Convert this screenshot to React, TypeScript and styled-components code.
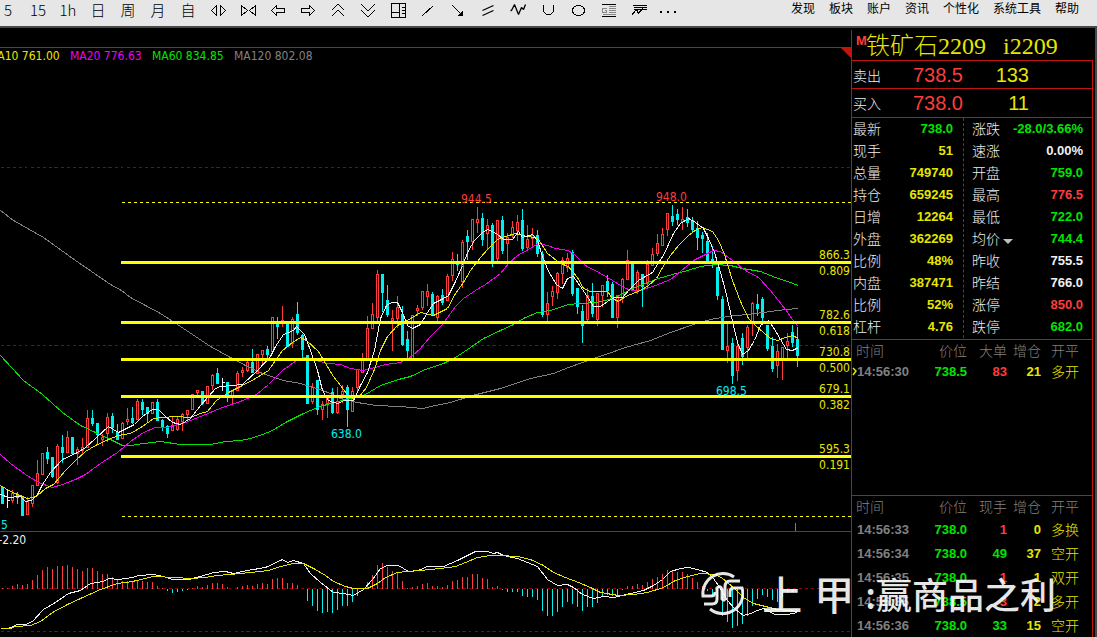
import React from "react";
import styled, { createGlobalStyle } from "styled-components";

const color = {
  line: "#c0140c",
  grid: "#960000",
  red: "#ff3c3c",
  green: "#00e600",
  yellow: "#e6e600",
  cyan: "#00f0f0",
  white: "#f0f0f0",
  gray: "#808080",
  magenta: "#f000f0",
};
type Tone = keyof typeof color;

const Global = createGlobalStyle`
  * { box-sizing: border-box; }
  body {
    margin: 0;
    background: #000;
    overflow: hidden;
    font-family: "Liberation Sans", "Noto Sans CJK SC", sans-serif;
  }
`;

const Screen = styled.div`
  position: relative;
  display: flex;
  flex-direction: column;
  height: 100vh;
  background: #000;
  overflow: hidden;
`;

/* ---------- toolbar ---------- */
const Toolbar = styled.header`
  flex: none;
  display: flex;
  justify-content: space-between;
  height: 28px;
  background: #e6e6e6;
  border-bottom: 2px solid #484848;
`;
const Tools = styled.div`
  display: flex;
  margin-left: -7px;
`;
const Tool = styled.button`
  display: flex;
  align-items: center;
  justify-content: center;
  width: 30px;
  height: 20px;
  padding: 0;
  border: 0;
  background: none;
  color: #000;
  font: 300 15px/20px "Noto Sans CJK SC", sans-serif;
`;
const Menu = styled.nav`
  display: flex;
  gap: 14px;
  padding-right: 18px;
`;
const MenuLink = styled.a`
  color: #000;
  font: 12px/16px "Noto Sans CJK SC", sans-serif;
  text-decoration: none;
  white-space: nowrap;
`;

/* ---------- body ---------- */
const Body = styled.main`
  flex: 1;
  min-height: 0;
  display: flex;
`;
const ChartColumn = styled.section`
  flex: 1;
  min-width: 0;
  overflow: hidden;
  padding-top: 19px;
`;
const Pane = styled.div`
  border-top: 1px solid ${color.line};
`;
const Legend = styled.div`
  display: flex;
  height: 16px;
  margin-left: -12px;
  font: 12px/16px "DejaVu Sans Condensed", "DejaVu Sans", sans-serif;
  font-stretch: condensed;
  white-space: nowrap;
`;
const LegendItem = styled.span<{ $tone: Tone }>`
  width: 82px;
  color: ${(p) => color[p.$tone]};
`;
const Corner = styled.svg`
  margin-left: auto;
`;
const Plot = styled.svg`
  display: block;
  width: 100%;
  height: auto;
  text {
    font: 12px "DejaVu Sans Condensed", "DejaVu Sans", sans-serif;
    font-stretch: condensed;
  }
`;

/* ---------- side panel ---------- */
const Side = styled.aside`
  flex: none;
  display: flex;
  flex-direction: column;
  width: 242px;
  margin-top: 2px;
  border-left: 1px solid ${color.line};
`;
const Edge = styled.div`
  flex: none;
  width: 4px;
  border-right: 2px solid #484848;
`;
const Title = styled.h1`
  display: flex;
  height: 30px;
  margin: 0;
  padding-left: 4px;
  color: ${color.yellow};
  font: 24px/32px "Liberation Serif", "Noto Sans CJK SC", serif;
  font-weight: 300;
  white-space: nowrap;
`;
const TitleMark = styled.span`
  width: 10px;
  color: ${color.red};
  font: bold 13px/22px "Liberation Sans", sans-serif;
`;
const Code = styled.span`
  margin-left: 17px;
`;
const Framed = styled.div`
  flex: 1;
  min-height: 0;
  display: flex;
  flex-direction: column;
  border-right: 1px solid ${color.line};
`;
const BookRow = styled.div`
  flex: none;
  display: grid;
  grid-template-columns: 58px 52px 66px;
  align-items: center;
  height: 28px;
  padding-left: 1px;
  border-top: 1px solid ${color.line};
  & + & { height: 29px; }
`;
const Label = styled.span`
  color: ${color.white};
  font: 300 14px/20px "Noto Sans CJK SC", sans-serif;
`;
const BookValue = styled.span<{ $tone: Tone }>`
  color: ${(p) => color[p.$tone]};
  font-size: 20px;
  line-height: 28px;
  text-align: right;
`;
const Quotes = styled.div`
  flex: none;
  display: grid;
  grid-template-columns: 112px 1fr;
  padding-bottom: 1px;
  border-top: 1px solid ${color.line};
  border-bottom: 1px solid ${color.line};
`;
const QuoteColumn = styled.div<{ $split?: boolean }>`
  padding: ${(p) => (p.$split ? "0 10px 0 1px" : "0 9px 0 8px")};
  border-right: ${(p) => (p.$split ? `1px dashed ${color.line}` : "0")};
`;
const Quote = styled.div`
  display: flex;
  align-items: flex-start;
  height: 22px;
`;
const Value = styled.span<{ $tone: Tone }>`
  margin-left: auto;
  color: ${(p) => color[p.$tone]};
  font: bold 13px/22px "Liberation Sans", sans-serif;
`;
const Caret = styled.svg`
  margin: 11px 0 0 3px;
`;
const Trades = styled.table<{ $row: number }>`
  flex: none;
  width: 100%;
  margin-bottom: -1px;
  table-layout: fixed;
  border-collapse: collapse;
  tbody tr {
    height: ${(p) => p.$row}px;
  }
`;
const Head = styled.th<{ $w?: number; $align?: string }>`
  width: ${(p) => (p.$w ? `${p.$w}px` : "auto")};
  height: 22px;
  padding: 0 0 2px;
  color: ${color.gray};
  font: 300 14px/20px "Noto Sans CJK SC", sans-serif;
  text-align: ${(p) => p.$align || "right"};
  &:first-child { padding-left: 4px; }
  &:last-child { padding-left: 10px; }
`;
const Cell = styled.td<{ $tone: Tone }>`
  padding: 0;
  color: ${(p) => color[p.$tone]};
  font: bold 13px/18px "Liberation Sans", sans-serif;
  text-align: right;
`;
const TimeCell = styled(Cell)`
  text-align: left;
  white-space: nowrap;
`;
const KindCell = styled(Cell)`
  padding: 0 0 2px 10px;
  font: 300 14px/18px "Noto Sans CJK SC", sans-serif;
  text-align: left;
`;
const Marker = styled.svg`
  display: inline-block;
  vertical-align: 0;
`;
const Spacer = styled.div`
  flex: 1;
  min-height: 0;
  border-bottom: 1px solid ${color.line};
`;

/* ---------- watermark ---------- */
const Watermark = styled.div`
  position: absolute;
  right: 41px;
  bottom: 22px;
  display: flex;
  align-items: center;
  height: 44px;
  color: #fff;
  opacity: 0.9;
  pointer-events: none;
  font: 500 36px/44px "Noto Sans CJK SC", sans-serif;
  white-space: nowrap;
`;
const Brand = styled.span`
  display: flex;
  gap: 12px;
  margin: 0 11px 0 18px;
  font-size: 40px;
  line-height: 40px;
`;

/* ---------- data ---------- */
// One row per bar: high, body top, body bottom, low. Kind: r rising, c falling, w flat.
const bars = `c487,487,503,503 w488,500,500,507 r489,493,500,502 c491,494,497,503 c497,497,515,515 r496,501,514,514
r484,485,503,506 r459,473,485,485 r452,453,474,474 c446,452,458,463 c457,457,476,477 r443,446,482,483
c434,447,452,462 r430,437,452,452 c437,437,453,454 r446,449,453,464 r437,447,450,454 r409,418,447,447
c409,418,423,425 c423,423,434,443 r433,437,439,445 r412,417,433,441 c412,416,427,432 c423,432,439,439
r421,423,438,438 r407,419,421,424 c406,418,422,423 r398,401,419,419 c398,402,409,414 c406,407,413,421
r401,402,413,413 c398,402,420,420 c418,420,426,430 c424,426,433,437 r415,425,430,430 r416,419,429,430
r412,414,421,430 r409,410,414,420 r393,394,409,409 r389,390,392,397 c391,391,403,404 r385,386,403,403
r373,375,385,389 c367,373,383,383 w377,382,382,390 c382,382,396,401 r390,391,396,403 r370,373,390,390
r366,370,372,376 r358,362,370,371 c348,362,372,372 r354,354,373,373 r349,350,354,364 c345,349,354,358
r316,317,351,351 c316,322,326,338 r305,320,322,326 c323,324,346,346 r316,319,343,347 c301,314,332,334
c333,335,349,357 c355,355,403,403 r382,387,401,403 c380,380,409,414 r400,404,409,419 r394,397,403,417
c387,392,412,413 r386,401,412,413 r384,391,394,402 c384,387,409,426 r386,391,411,411 r368,369,387,392
r352,360,372,372 r315,328,358,358 r302,314,328,328 r269,274,317,320 c273,274,292,311 c284,300,314,316
r309,318,320,350 r295,307,318,327 c305,314,344,345 c330,339,350,358 r315,315,358,358 r304,308,310,315
r291,291,307,309 r283,291,296,305 c291,294,314,314 r294,296,317,321 c288,295,302,304 r273,276,300,300
r251,259,275,280 c253,262,264,270 r239,242,281,287 c229,236,241,259 r219,219,241,249 r206,219,222,232
c212,218,239,245 r218,225,233,248 c222,225,262,266 r219,220,258,260 c215,220,250,253 r232,237,243,262
r220,227,235,237 r214,222,230,240 c208,220,248,250 r224,239,247,248 r227,235,238,247 c229,235,253,256
c250,254,314,316 r291,303,314,321 r285,291,296,305 r271,273,292,298 r256,260,273,283 r252,258,267,271
c249,252,293,295 c287,288,306,313 c304,311,325,342 r287,295,319,321 c282,296,313,316 r293,293,319,325
r284,285,295,306 c274,281,290,296 c281,284,317,317 r294,295,317,327 r277,279,298,302 r249,260,279,279
c263,263,290,290 r269,272,290,293 c274,274,286,306 r259,264,283,287 r247,254,265,265 r233,243,253,255
r227,234,245,245 r212,213,229,235 c204,216,221,225 c208,214,219,224 r206,219,221,229 c208,217,222,226
c216,220,229,231 c220,228,237,249 c231,235,238,252 c232,241,262,262 c245,259,262,267 c267,267,295,299
c295,299,349,349 r323,346,350,362 c337,343,375,383 r340,346,370,380 c332,338,356,364 r324,327,347,358
r301,303,323,335 c293,304,308,315 c296,299,317,320 c325,325,348,350 c336,346,368,371 r343,351,365,377
r346,347,360,379 r332,341,345,358 c324,332,342,346 c326,339,355,366`
  .split(/\s+/)
  .map((s) => ({ kind: s[0], v: s.slice(1).split(",").map(Number) }));

const averages: { tone: Tone; points: string }[] = [
  {
    tone: "gray",
    points:
      "0,210 13,220 43,237 75,260 110,284 121,290 130,297 160,313 180,326 210,346 230,357 245,365 262,373 283,380 300,383 325,391 340,398 357,402 375,405 400,406 422,408 435,405 450,402 472,395 500,388 530,378 553,373 568,367 585,361 605,354 625,347 650,340 670,332 693,324 710,319 727,316 747,314 770,311 785,309 798,308",
  },
  {
    tone: "green",
    points:
      "0,355 23,380 42,394 62,412 80,425 95,432 110,439 122,445 130,445 143,443 160,441 180,444 210,444 225,441 240,440 250,438 262,434 272,430 287,421 303,413 317,407 333,402 350,398 365,394 380,385 398,379 410,376 425,369 443,363 455,357 470,347 483,338 500,330 513,324 525,317 537,312 550,310 568,304 580,303 595,302 605,300 615,297 630,289 645,283 658,278 672,274 687,270 700,266 715,264 730,265 742,268 760,271 775,277 787,281 798,285",
  },
  {
    tone: "magenta",
    points:
      "0,454 10,463 25,474 38,482 52,487 62,484 75,479 85,474 100,463 117,452 130,441 143,432 155,427 167,427 185,422 205,414 222,407 240,401 256,394 268,384 282,370 296,360 304,357 315,360 328,363 340,364 350,368 363,370 378,366 385,364 400,362 411,356 420,348 430,336 442,324 455,306 463,298 475,290 485,284 500,273 508,263 517,255 528,249 538,243 547,245 555,248 568,250 575,255 585,265 600,273 612,280 625,288 637,291 655,285 670,279 680,271 693,260 705,254 713,250 720,251 732,260 745,270 758,277 770,290 785,309 792,319 798,326",
  },
  {
    tone: "yellow",
    points:
      "0,485 10,491 27,498 36,496 45,488 53,484 65,470 75,460 85,451 95,445 108,439 118,435 130,433 142,426 153,418 162,417 175,416 190,417 200,413 207,411 216,400 228,392 240,386 255,378 268,370 282,350 292,342 300,337 306,340 318,351 325,363 333,376 340,385 346,393 352,398 358,397 366,387 374,369 380,350 387,336 397,325 407,320 420,312 433,315 447,308 455,293 463,282 470,270 480,257 488,248 497,239 505,236 515,233 522,235 533,237 538,239 547,253 560,263 568,266 577,277 583,288 590,291 607,291 612,298 618,301 625,296 640,290 648,285 656,278 662,267 670,255 678,245 688,235 696,229 702,227 712,231 718,240 724,254 732,280 740,301 748,318 755,325 763,332 770,338 777,340 785,337 792,335 798,338",
  },
  {
    tone: "white",
    points:
      "0,494 8,497 20,496 25,501 31,500 37,494 42,484 50,472 62,459 77,452 85,447 95,438 108,426 118,432 128,427 134,424 142,416 152,409 158,409 165,416 172,422 180,424 190,418 200,405 208,396 215,388 220,386 232,385 242,384 257,370 270,356 275,346 283,334 293,330 296,326 304,334 310,350 317,370 322,390 328,400 333,402 338,403 343,400 353,400 360,385 367,372 374,350 380,318 386,305 391,302 397,302 402,312 407,325 412,328 420,324 427,312 433,303 443,298 448,295 455,281 462,265 468,250 474,240 482,232 487,229 496,233 503,239 512,239 518,231 522,237 532,234 537,240 542,256 548,271 556,284 562,288 567,278 573,276 580,286 588,298 593,306 600,306 607,301 614,297 622,297 630,288 638,280 652,272 658,262 663,255 668,244 673,233 680,223 688,218 695,222 703,228 708,238 714,252 720,272 725,290 730,312 737,342 742,354 748,350 754,340 760,325 768,320 773,327 780,339 786,349 792,350 798,347",
  },
];

const levels = [
  { y: 262, price: "866.3", ratio: "0.809" },
  { y: 322, price: "782.6", ratio: "0.618" },
  { y: 359, price: "730.8", ratio: "0.500" },
  { y: 396, price: "679.1", ratio: "0.382" },
  { y: 456, price: "595.3", ratio: "0.191" },
];

// Height of each histogram bar over (or under) the zero line.
const histogram = [
  1, 1, 3, 5, 4, 5, 9, 14, 19, 22, 20, 23, 23, 24, 22, 20, 18, 21, 21, 18, 15, 15, 12, 9, 8, 8, 7, 8, 8, 7, 7, 3, 1,
  -2, -4, -3, -2, -1, 1, 3, 2, 4, 6, 6, 5, 2, 0, 2, 3, 4, 3, 5, 6, 5, 10, 11, 11, 6, 6, 4, 0, -12, -17, -22, -24, -23,
  -24, -21, -17, -17, -13, -7, 0, 7, 14, 24, 26, 22, 18, 16, 8, 1, 2, 3, 5, 6, 3, 3, 2, 4, 8, 9, 12, 12, 15, 15, 11,
  10, 2, 3, -1, -3, -3, -3, -7, -8, -8, -11, -22, -27, -27, -23, -18, -13, -15, -18, -22, -18, -18, -14, -8, -6, -7,
  -6, -1, 3, 3, 5, 4, 7, 10, 12, 15, 19, 19, 17, 17, 15, 11, 7, 3, -2, -7, -11, -27, -33, -39, -37, -35, -27, -17,
  -10, -6, -8, -11, -13, -8, -4, -3, 0,
];
const dif =
  "0,628 8,628 17,624 25,624 32,621 43,609 55,602 68,593 80,590 90,583 103,581 108,578 118,579 132,577 138,575 153,574 163,576 172,579 188,579 200,576 213,572 225,571 233,573 247,570 265,567 282,559 287,562 293,560 303,563 310,573 320,582 333,592 343,593 353,595 363,589 372,579 380,568 387,565 398,565 408,571 418,570 427,566 443,566 457,560 475,551 487,551 493,553 497,552 503,555 517,558 527,562 537,566 547,579 557,585 567,584 573,587 582,594 593,598 603,596 613,597 622,595 630,593 643,590 653,585 662,579 670,571 680,568 688,567 697,569 707,572 713,578 720,588 727,600 735,609 743,615 750,613 757,610 763,608 770,612 775,614 787,614 797,612";
const dea =
  "0,628 10,628 15,626 30,625 40,621 52,612 67,604 80,598 100,589 117,583 132,581 153,576 175,577 190,578 205,577 217,575 240,573 250,572 268,570 280,566 293,563 303,563 313,568 325,575 333,581 345,586 353,588 367,588 377,583 385,577 397,572 407,571 420,570 440,568 455,566 465,562 477,557 490,555 500,555 517,556 530,559 543,565 553,572 565,577 578,582 590,587 600,592 618,595 633,594 647,592 663,587 675,580 687,576 700,573 715,574 722,578 733,587 743,597 753,603 765,606 777,609 797,611";

const leftQuotes: [string, string, Tone][] = [
  ["最新", "738.0", "green"],
  ["现手", "51", "yellow"],
  ["总量", "749740", "yellow"],
  ["持仓", "659245", "yellow"],
  ["日增", "12264", "yellow"],
  ["外盘", "362269", "yellow"],
  ["比例", "48%", "yellow"],
  ["内盘", "387471", "yellow"],
  ["比例", "52%", "yellow"],
  ["杠杆", "4.76", "yellow"],
];
const rightQuotes: [string, string, Tone][] = [
  ["涨跌", "-28.0/3.66%", "green"],
  ["速涨", "0.00%", "white"],
  ["开盘", "759.0", "green"],
  ["最高", "776.5", "red"],
  ["最低", "722.0", "green"],
  ["均价", "744.4", "green"],
  ["昨收", "755.5", "white"],
  ["昨结", "766.0", "white"],
  ["涨停", "850.0", "red"],
  ["跌停", "682.0", "green"],
];

type Trade = { time: string; price: string; lots: string; tone: Tone; delta: string; kind: string; marked?: boolean };
const bigTrades: Trade[] = [
  { time: "14:56:30", price: "738.5", lots: "83", tone: "red", delta: "21", kind: "多开", marked: true },
];
const ticks: Trade[] = [
  { time: "14:56:33", price: "738.0", lots: "1", tone: "red", delta: "0", kind: "多换" },
  { time: "14:56:34", price: "738.0", lots: "49", tone: "green", delta: "37", kind: "空开" },
  { time: "14:56:35", price: "738.0", lots: "1", tone: "red", delta: "1", kind: "双开" },
  { time: "14:56:35", price: "738.5", lots: "3", tone: "red", delta: "2", kind: "多开" },
  { time: "14:56:36", price: "738.0", lots: "33", tone: "green", delta: "15", kind: "空开" },
];

/* ---------- toolbar icons, drawn on a 20px grid ---------- */
const icons: { name: string; art: React.ReactNode }[] = [
  { name: "横向放大", art: <path d="M8 5v10M8 5L3 10l5 5M12 5v10M12 5l5 5-5 5" /> },
  { name: "横向缩小", art: <path d="M3 5v10l6-5zM17 5v10l-6-5z" /> },
  { name: "左移", art: <path d="M3 10l5-5v3h8v4H8v3z" /> },
  { name: "右移", art: <path d="M16 10l-5-5v3H3v4h8v3z" /> },
  { name: "向上", art: <path d="M3 10l6-6 1 0 6 6M3 16l6-6 1 0 6 6" /> },
  { name: "向下", art: <path d="M3 4l6 6 1 0 6-6M3 10l6 6 1 0 6-6" /> },
  {
    name: "布局",
    art: <path d="M3 3h14v14H3zM11 3v14M3 12h8M13 7h3M13 10h3M13 13h3" />,
  },
  { name: "直线", art: <path d="M4 15L15 5" /> },
  {
    name: "箭头线",
    art: (
      <>
        <path d="M4 5l9 9" />
        <path d="M14 11v4h-4z" fill="#000" />
      </>
    ),
  },
  { name: "平行线", art: <path d="M4 10l11-5M4 15l11-5" strokeWidth="1.3" shapeRendering="auto" /> },
  {
    name: "波浪线",
    art: <path d="M2 10h1l3-6 4 10 3-7 2 2 2-5" strokeWidth="1.3" strokeLinejoin="bevel" shapeRendering="auto" />,
  },
  { name: "弧线", art: <path d="M5 4v6q1 4 5 4t5-4V4" /> },
  { name: "椭圆", art: <ellipse cx="10" cy="10" rx="6" ry="5" /> },
  {
    name: "黄金分割",
    art: (
      <>
        <path d="M3 4h14M3 16h14" />
        <path d="M10 6h7M10 8h7M10 10h7M10 12h7M4 14h13M8 8H4v4h4v-2H6" stroke="#888" />
      </>
    ),
  },
  { name: "扇形线", art: <path d="M4 5h14M5 7h13M5 9h13M3 15l5-6 2 4 4-5M10 12l4-4" /> },
  {
    name: "更多",
    art: <path d="M2 11h1v1H2zM9 11h1v1H9zM16 11h1v1h-1z" fill="#000" />,
  },
];

const Icon = ({ children }: { children: React.ReactNode }) => (
  <svg width="20" height="20" viewBox="0 0 20 20" fill="none" stroke="#000" shapeRendering="crispEdges" aria-hidden>
    <g transform="translate(.5 .5)">{children}</g>
  </svg>
);

function PriceChart() {
  return (
    <Plot viewBox="0 64 851 467" shapeRendering="crispEdges">
      <g transform="translate(.5 .5)" fill="none">
        <path d="M0 167H850M0 345H850" stroke={color.grid} strokeDasharray="3 3" />
        {bars.map(({ kind, v: [high, top, bottom, low] }, i) => {
          const x = 2 + i * 5;
          const tone = kind === "r" ? color.red : kind === "c" ? color.cyan : color.white;
          return (
            <g key={i} stroke={tone}>
              <path d={`M${x} ${high}V${low}`} />
              {kind === "w" ? (
                <path d={`M${x - 1} ${top}h3`} />
              ) : (
                <rect
                  x={x - 1}
                  y={top}
                  width={2}
                  height={Math.max(1, bottom - top)}
                  fill={kind === "r" ? "#000" : color.cyan}
                />
              )}
            </g>
          );
        })}
        {averages.map((m) => (
          <polyline key={m.tone} points={m.points} stroke={color[m.tone]} />
        ))}
        <path d="M121 202H850M121 516H850" stroke="#ffff00" strokeDasharray="3 3" />
        {levels.map((l) => (
          <path key={l.y} d={`M120 ${l.y}H851`} stroke="#ffff00" strokeWidth="3" />
        ))}
        <path d="M795 522v9" stroke={color.gray} />
      </g>
      <g fill={color.yellow} textAnchor="end">
        {levels.map((l) => (
          <React.Fragment key={l.y}>
            <text x="850" y={l.y - 3}>{l.price}</text>
            <text x="850" y={l.y + 13}>{l.ratio}</text>
          </React.Fragment>
        ))}
      </g>
      <g fill={color.red}>
        <text x="461" y="203">944.5</text>
        <text x="656" y="201">948.0</text>
      </g>
      <g fill={color.cyan}>
        <text x="716" y="395">698.5</text>
        <text x="331" y="438">638.0</text>
        <text x="1" y="529">5</text>
      </g>
    </Plot>
  );
}

function MacdChart() {
  return (
    <Plot viewBox="0 548 851 89" shapeRendering="crispEdges">
      <g transform="translate(.5 .5)" fill="none">
        <path d="M0 588H850M0 631H850" stroke={color.grid} strokeDasharray="3 3" />
        {histogram.map((h, i) =>
          h === 0 ? null : (
            <path key={i} d={`M${2 + i * 5} 588v${-h}`} stroke={h > 0 ? color.red : color.cyan} />
          ),
        )}
        <polyline points={dif} stroke={color.white} />
        <polyline points={dea} stroke={color.yellow} />
      </g>
    </Plot>
  );
}

function TradeTable({ lotsTitle, rows, rowHeight }: { lotsTitle: string; rows: Trade[]; rowHeight: number }) {
  return (
    <Trades $row={rowHeight}>
      <thead>
        <tr>
          <Head $w={65} $align="left">时间</Head>
          <Head $w={50}>价位</Head>
          <Head $w={40}>{lotsTitle}</Head>
          <Head $w={34}>增仓</Head>
          <Head $align="left">开平</Head>
        </tr>
      </thead>
      <tbody>
        {rows.map((r, i) => (
          <tr key={i}>
            <TimeCell $tone="gray">
              <Marker width="5" height="9" viewBox="0 0 5 9" fill="none" stroke={color.yellow} aria-hidden>
                {r.marked && <path d="M1 1l3 3-3 4" strokeWidth="1.5" />}
              </Marker>
              {r.time}
            </TimeCell>
            <Cell $tone="green">{r.price}</Cell>
            <Cell $tone={r.tone}>{r.lots}</Cell>
            <Cell $tone="yellow">{r.delta}</Cell>
            <KindCell $tone="yellow">{r.kind}</KindCell>
          </tr>
        ))}
      </tbody>
    </Trades>
  );
}

export default function App() {
  return (
    <Screen>
      <Global />
      <Toolbar>
        <Tools>
          {["5", "15", "1h", "日", "周", "月", "自"].map((t) => (
            <Tool key={t}>{t}</Tool>
          ))}
          {icons.map((i) => (
            <Tool key={i.name} aria-label={i.name}>
              <Icon>{i.art}</Icon>
            </Tool>
          ))}
        </Tools>
        <Menu>
          {["发现", "板块", "账户", "资讯", "个性化", "系统工具", "帮助"].map((m) => (
            <MenuLink key={m} href="#">{m}</MenuLink>
          ))}
        </Menu>
      </Toolbar>

      <Body>
        <ChartColumn>
          <Pane>
            <Legend>
              <LegendItem $tone="yellow">MA10 761.00</LegendItem>
              <LegendItem $tone="magenta">MA20 776.63</LegendItem>
              <LegendItem $tone="green">MA60 834.85</LegendItem>
              <LegendItem $tone="gray">MA120 802.08</LegendItem>
              <Corner width="10" height="10" viewBox="0 0 10 10" aria-hidden>
                <path d="M0 0h10v10z" fill={color.line} />
              </Corner>
            </Legend>
            <PriceChart />
          </Pane>
          <Pane>
            <Legend>
              <LegendItem $tone="white">&nbsp;&nbsp;&nbsp;-2.20</LegendItem>
            </Legend>
            <MacdChart />
          </Pane>
        </ChartColumn>

        <Side>
          <Title>
            <TitleMark>M</TitleMark>
            铁矿石2209<Code>i2209</Code>
          </Title>
          <Framed>
            <BookRow>
              <Label>卖出</Label>
              <BookValue $tone="red">738.5</BookValue>
              <BookValue $tone="yellow">133</BookValue>
            </BookRow>
            <BookRow>
              <Label>买入</Label>
              <BookValue $tone="red">738.0</BookValue>
              <BookValue $tone="yellow">11</BookValue>
            </BookRow>
            <Quotes>
              <QuoteColumn $split>
                {leftQuotes.map(([label, value, tone], i) => (
                  <Quote key={i}>
                    <Label>{label}</Label>
                    <Value $tone={tone}>{value}</Value>
                  </Quote>
                ))}
              </QuoteColumn>
              <QuoteColumn>
                {rightQuotes.map(([label, value, tone]) => (
                  <Quote key={label}>
                    <Label>{label}</Label>
                    {label === "均价" && (
                      <Caret width="10" height="5" viewBox="0 0 10 5" aria-hidden>
                        <path d="M0 0h10L5 5z" fill="#c0c0c0" />
                      </Caret>
                    )}
                    <Value $tone={tone}>{value}</Value>
                  </Quote>
                ))}
              </QuoteColumn>
            </Quotes>
            <TradeTable lotsTitle="大单" rows={bigTrades} rowHeight={20} />
            <Spacer />
            <TradeTable lotsTitle="现手" rows={ticks} rowHeight={24} />
          </Framed>
        </Side>
        <Edge />
      </Body>

      <Watermark>
        <svg width="44" height="44" viewBox="0 0 44 44" fill="none" stroke="#fff" strokeWidth="3" aria-hidden>
          <path d="M34 6A20 20 0 0 0 3 25H11Q15 25 15 21" />
          <path d="M4 33H12Q17 33 17 28V17Q21 14 22 19V28Q25 31 25 26V16Q25 10 30 10H40" />
          <path d="M10 38A20 20 0 0 0 42 17H34Q30 17 30 21V26" />
        </svg>
        <Brand>
          <span>上</span>
          <span>甲</span>
        </Brand>
        <span>:赢商品之利</span>
      </Watermark>
    </Screen>
  );
}
